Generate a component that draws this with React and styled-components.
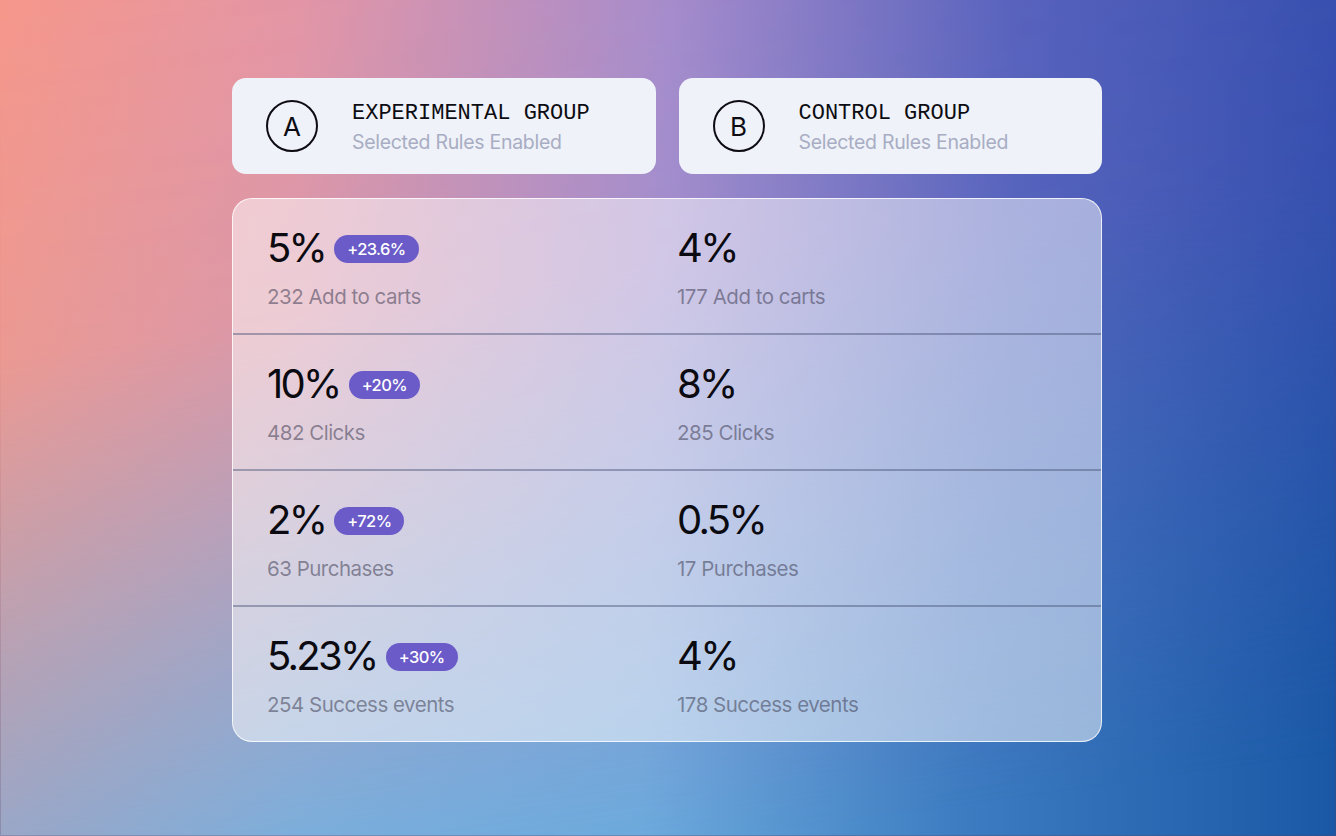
import styled, { createGlobalStyle } from 'styled-components';

const GlobalStyle = createGlobalStyle`
    html, body {
        margin: 0;
        padding: 0;
    }
    body {
        font-family: Inter, "Noto Sans", sans-serif;
    }
`;

const Page = styled.div`
    position: relative;
    box-sizing: border-box;
    width: 1336px;
    height: 836px;
    padding: 78px 0 0 232px;
    box-shadow: inset 0 0 0 1px rgba(70, 70, 110, 0.3);
    background: linear-gradient(90deg, #8aaad2 0%, #72b1e1 22%, #6cabdd 48%, #3d7cc1 72%, #1a58a6 100%);
    overflow: hidden;

    &::before {
        content: "";
        position: absolute;
        inset: 0;
        background: linear-gradient(90deg, #f6978b 0%, #e595a4 22%, #a88bcb 50%, #5a62bd 76%, #3a4fb0 100%);
        -webkit-mask-image: linear-gradient(172deg, #000 0%, rgba(0, 0, 0, 0.9) 35%, rgba(0, 0, 0, 0.4) 65%, transparent 92%);
        mask-image: linear-gradient(172deg, #000 0%, rgba(0, 0, 0, 0.9) 35%, rgba(0, 0, 0, 0.4) 65%, transparent 92%);
    }
`;

const Content = styled.div`
    position: relative;
    width: 870px;
    display: flex;
    flex-direction: column;
    gap: 24px;
`;

const Groups = styled.div`
    display: grid;
    grid-template-columns: 1fr 1fr;
    gap: 23px;
`;

const GroupCard = styled.div`
    height: 96px;
    box-sizing: border-box;
    border-radius: 14px;
    background: #eff2f8;
    display: flex;
    align-items: center;
    padding-left: 34px;
    gap: 34px;
`;

const Badge = styled.div`
    width: 52px;
    height: 52px;
    box-sizing: border-box;
    border-radius: 50%;
    border: 2px solid #0c0c12;
    display: flex;
    align-items: center;
    justify-content: center;
    font-size: 26px;
    color: #0c0c12;
    flex-shrink: 0;
`;

const GroupText = styled.div`
    display: flex;
    flex-direction: column;
    gap: 4px;
    padding-top: 2px;
`;

const GroupTitle = styled.div`
    font-family: "Liberation Mono", "DejaVu Sans Mono", monospace;
    font-size: 22px;
    line-height: 26px;
    color: #0c0c12;
`;

const GroupSub = styled.div`
    font-size: 19.5px;
    line-height: 22px;
    color: #a8adc4;
    letter-spacing: -0.3px;
`;

const Panel = styled.div`
    border-radius: 20px;
    border: 1.5px solid rgba(255, 255, 255, 0.8);
    background: rgba(255, 255, 255, 0.5);
    overflow: hidden;
`;

const Row = styled.div`
    height: 134px;
    display: grid;
    grid-template-columns: 410px 1fr;
    padding-left: 34px;
    border-top: ${props => (props.first ? 'none' : '2px solid rgba(72, 82, 118, 0.45)')};
`;

const Cell = styled.div`
    display: flex;
    flex-direction: column;
    padding-top: 25px;
    gap: 13px;
`;

const ValueLine = styled.div`
    display: flex;
    align-items: center;
    gap: 9px;
`;

const Value = styled.span`
    font-size: 40px;
    line-height: 48px;
    letter-spacing: -2.7px;
    color: #0a0a10;
`;

const Lift = styled.span`
    height: 28px;
    padding: 0 13px;
    border-radius: 14px;
    background: #6a5bc8;
    color: #fff;
    font-size: 16.5px;
    font-weight: 500;
    letter-spacing: -0.6px;
    display: flex;
    align-items: center;
    margin-top: 1px;
`;

const Label = styled.span`
    font-size: 20.5px;
    line-height: 24px;
    letter-spacing: -0.5px;
    color: rgba(50, 48, 70, 0.5);
`;

const groups = [
    { letter: 'A', title: 'EXPERIMENTAL GROUP' },
    { letter: 'B', title: 'CONTROL GROUP' },
];

const metrics = [
    { a: '5%', lift: '+23.6%', aLabel: '232 Add to carts', b: '4%', bLabel: '177 Add to carts' },
    { a: '10%', lift: '+20%', aLabel: '482 Clicks', b: '8%', bLabel: '285 Clicks' },
    { a: '2%', lift: '+72%', aLabel: '63 Purchases', b: '0.5%', bLabel: '17 Purchases' },
    { a: '5.23%', lift: '+30%', aLabel: '254 Success events', b: '4%', bLabel: '178 Success events' },
];

export default function App() {
    return (
        <>
            <GlobalStyle />
            <Page>
                <Content>
                    <Groups>
                        {groups.map(g => (
                            <GroupCard key={g.letter}>
                                <Badge>{g.letter}</Badge>
                                <GroupText>
                                    <GroupTitle>{g.title}</GroupTitle>
                                    <GroupSub>Selected Rules Enabled</GroupSub>
                                </GroupText>
                            </GroupCard>
                        ))}
                    </Groups>
                    <Panel>
                        {metrics.map((m, i) => (
                            <Row key={m.aLabel} first={i === 0}>
                                <Cell>
                                    <ValueLine>
                                        <Value>{m.a}</Value>
                                        <Lift>{m.lift}</Lift>
                                    </ValueLine>
                                    <Label>{m.aLabel}</Label>
                                </Cell>
                                <Cell>
                                    <ValueLine>
                                        <Value>{m.b}</Value>
                                    </ValueLine>
                                    <Label>{m.bLabel}</Label>
                                </Cell>
                            </Row>
                        ))}
                    </Panel>
                </Content>
            </Page>
        </>
    );
}
